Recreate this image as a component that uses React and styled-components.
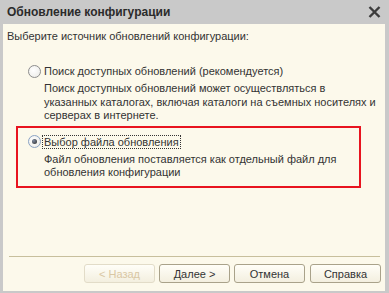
import React, { useState } from "react";
import styled, { createGlobalStyle } from "styled-components";

const GlobalStyle = createGlobalStyle`
  html, body {
    margin: 0;
    padding: 0;
    background: #c9c9c9;
  }
  body {
    font-family: "Liberation Sans", Arial, sans-serif;
    font-size: 11px;
    color: #333;
  }
`;

const Window = styled.div`
  width: 389px;
  height: 293px;
  box-sizing: border-box;
  display: flex;
  flex-direction: column;
  background: #c9c9c9;
  padding: 0 4px 2px 3px;
`;

const TitleBar = styled.div`
  height: 24px;
  display: flex;
  align-items: center;
  justify-content: space-between;
  padding: 0 4px 0 4px;
`;

const Title = styled.span`
  font-size: 12px;
  font-weight: bold;
  color: #2b2b2b;
`;

const CloseButton = styled.button`
  border: none;
  background: transparent;
  padding: 0;
  width: 14px;
  height: 14px;
  display: flex;
  align-items: center;
  justify-content: center;
  cursor: pointer;
`;

const Body = styled.div`
  flex: 1;
  display: flex;
  flex-direction: column;
  background: #fcf9eb;
  padding: 5px 4px 8px 4px;
`;

const Prompt = styled.div`
  line-height: 14px;
`;

const Options = styled.div`
  display: flex;
  flex-direction: column;
  margin-top: 21px;
  padding-left: 21px;
`;

const Option = styled.div`
  display: flex;
  flex-direction: column;
  border: ${(p) => (p.highlight ? "2px solid #e8141f" : "none")};
  margin: ${(p) => (p.highlight ? "3px 20px 0 -12px" : "0")};
  padding: ${(p) => (p.highlight ? "7px 0 6px 10px" : "0")};
`;

const RadioRow = styled.label`
  display: flex;
  align-items: center;
  height: 14px;
  cursor: pointer;
`;

const RadioCircle = styled.span`
  width: 13px;
  height: 13px;
  box-sizing: border-box;
  border-radius: 50%;
  border: 1px solid ${(p) => (p.checked ? "#8aa3c4" : "#8d8d8d")};
  background: radial-gradient(circle at 40% 40%, #ffffff 0%, #e9e9e4 100%);
  display: flex;
  align-items: center;
  justify-content: center;
  flex-shrink: 0;

  &::after {
    content: "";
    width: 5px;
    height: 5px;
    border-radius: 50%;
    background: radial-gradient(circle at 35% 35%, #7c8aa0 0%, #333 90%);
    display: ${(p) => (p.checked ? "block" : "none")};
  }
`;

const RadioLabel = styled.span`
  margin-left: 1px;
  padding: 0 1px;
  line-height: 12px;
  border: 1px dotted ${(p) => (p.focused ? "#333" : "transparent")};
`;

const Description = styled.div`
  margin-top: 4px;
  padding-left: 16px;
  line-height: 13.5px;
`;

const Spacer = styled.div`
  flex: 1;
`;

const Separator = styled.div`
  height: 1px;
  background: #c7bf9c;
  margin: 0 1px 0 2px;
`;

const ButtonRow = styled.div`
  display: flex;
  justify-content: flex-end;
  gap: 5px;
  margin-top: 7px;
`;

const Button = styled.button`
  width: 71px;
  height: 19px;
  box-sizing: border-box;
  border-radius: 3px;
  border: 1px solid ${(p) => (p.disabled ? "#e2dcc8" : "#a9a28a")};
  background: linear-gradient(#fffef8, #f3efdf);
  font-family: "Liberation Sans", Arial, sans-serif;
  font-size: 11px;
  color: ${(p) => (p.disabled ? "#d9c7a4" : "#333")};
  padding: 0;
  cursor: ${(p) => (p.disabled ? "default" : "pointer")};
  margin-right: ${(p) => (p.tight ? "-1px" : "0")};
`;

const CloseIcon = () => (
  <svg width="13" height="12" viewBox="0 0 13 12">
    <path d="M1.5 1 L11.5 11 M11.5 1 L1.5 11" stroke="#3c3c3c" strokeWidth="2.4" />
  </svg>
);

const options = [
  {
    id: "search",
    label: "Поиск доступных обновлений (рекомендуется)",
    text: "Поиск доступных обновлений может осуществляться в указанных каталогах, включая каталоги на съемных носителях и серверах в интернете.",
  },
  {
    id: "file",
    label: "Выбор файла обновления",
    text: "Файл обновления поставляется как отдельный файл для обновления конфигурации",
  },
];

const App = () => {
  const [source, setSource] = useState("file");

  return (
    <>
      <GlobalStyle />
      <Window>
        <TitleBar>
          <Title>Обновление конфигурации</Title>
          <CloseButton>
            <CloseIcon />
          </CloseButton>
        </TitleBar>
        <Body>
          <Prompt>Выберите источник обновлений конфигурации:</Prompt>
          <Options>
            {options.map((o) => (
              <Option key={o.id} highlight={o.id === "file"}>
                <RadioRow onClick={() => setSource(o.id)}>
                  <RadioCircle checked={source === o.id} />
                  <RadioLabel focused={source === o.id}>{o.label}</RadioLabel>
                </RadioRow>
                <Description>{o.text}</Description>
              </Option>
            ))}
          </Options>
          <Spacer />
          <Separator />
          <ButtonRow>
            <Button disabled tight>
              &lt; Назад
            </Button>
            <Button tight>Далее &gt;</Button>
            <Button>Отмена</Button>
            <Button>Справка</Button>
          </ButtonRow>
        </Body>
      </Window>
    </>
  );
};

export default App;
